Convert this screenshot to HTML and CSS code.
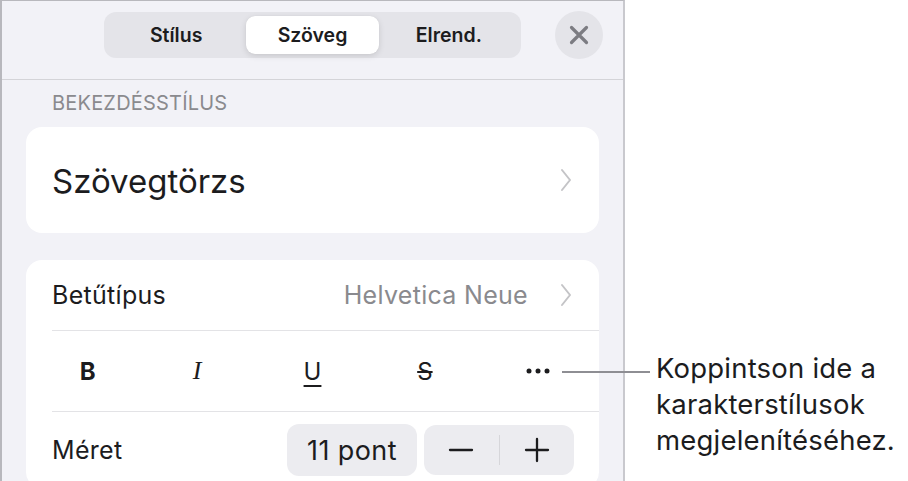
FILE: index.html
```html
<!DOCTYPE html>
<html lang="hu">
<head>
<meta charset="utf-8">
<link rel="stylesheet" href="styles.css">
</head>
<body>
<div class="stage">
  <div class="panel">
    <div class="header">
      <div></div>
      <div class="segmented">
        <div class="seg">Stílus</div>
        <div class="seg active">Szöveg</div>
        <div class="seg">Elrend.</div>
      </div>
      <div class="close">
        <svg width="20" height="20" viewBox="0 0 20 20"><path d="M2.5 2.5 L17.5 17.5 M17.5 2.5 L2.5 17.5" stroke="#7c7c82" stroke-width="3.2" stroke-linecap="round" fill="none"/></svg>
      </div>
    </div>
    <div class="section-title">BEKEZDÉSSTÍLUS</div>
    <div class="card card-style">
      <span class="big">Szövegtörzs</span>
      <svg class="chev" width="12" height="24" viewBox="0 0 12 24"><path d="M2 2 L10 12 L2 22" stroke="#c4c4c7" stroke-width="2" fill="none" stroke-linecap="round" stroke-linejoin="round"/></svg>
    </div>
    <div class="card card-font">
      <div class="row row-font">
        <span class="label">Betűtípus</span>
        <span class="value">Helvetica Neue</span>
        <svg class="chev" width="12" height="24" viewBox="0 0 12 24"><path d="M2 2 L10 12 L2 22" stroke="#c4c4c7" stroke-width="2" fill="none" stroke-linecap="round" stroke-linejoin="round"/></svg>
      </div>
      <div class="row row-styles">
        <span class="fmt b">B</span>
        <span class="fmt i">I</span>
        <span class="fmt u">U</span>
        <span class="fmt s">S</span>
        <span class="fmt dots">
          <svg width="24" height="6" viewBox="0 0 24 6"><circle cx="3" cy="3" r="2.5" fill="#1c1c1e"/><circle cx="12" cy="3" r="2.5" fill="#1c1c1e"/><circle cx="21" cy="3" r="2.5" fill="#1c1c1e"/></svg>
        </span>
      </div>
      <div class="row row-size">
        <span class="label">Méret</span>
        <div class="size-box">11 pont</div>
        <div class="stepper">
          <span class="step">
            <svg width="26" height="26" viewBox="0 0 26 26"><path d="M2 13 H24" stroke="#1c1c1e" stroke-width="2.3" stroke-linecap="round"/></svg>
          </span>
          <span class="step-div"></span>
          <span class="step">
            <svg width="26" height="26" viewBox="0 0 26 26"><path d="M2 13 H24 M13 2 V24" stroke="#1c1c1e" stroke-width="2.3" stroke-linecap="round"/></svg>
          </span>
        </div>
      </div>
    </div>
  </div>
  <div class="callout">
    <span class="callout-line"></span>
    <p class="callout-text">Koppintson ide a<br>karakterstílusok<br>megjelenítéséhez.</p>
  </div>
</div>
</body>
</html>
```

FILE: styles.css
```css
html, body {
  margin: 0;
  padding: 0;
  background: #ffffff;
}
body {
  width: 908px;
  height: 481px;
  overflow: hidden;
  font-family: Inter, "Liberation Sans", sans-serif;
  color: #1c1c1e;
}
.stage {
  position: relative;
  width: 908px;
  height: 481px;
}
.panel {
  width: 621px;
  height: 500px;
  background: #f2f2f7;
  border-left: 2px solid #b8b8bd;
  border-right: 2px solid #c9c9ce;
  border-top: 1px solid #b8b8bd;
}
.header {
  height: 78px;
  border-bottom: 1px solid #d4d4d8;
  display: grid;
  grid-template-columns: 1fr auto 1fr;
  align-items: center;
}
.segmented {
  margin-top: -10px;
  width: 409px;
  height: 38px;
  padding: 4px;
  border-radius: 12px;
  background: #e4e4e9;
  display: grid;
  grid-template-columns: 1fr 1fr 1fr;
}
.seg {
  display: flex;
  align-items: center;
  justify-content: center;
  font-size: 19.5px;
  font-weight: 600;
  border-radius: 9px;
}
.seg.active {
  background: #ffffff;
  margin: 0 2px;
  box-shadow: 0 2px 6px rgba(0,0,0,0.12), 0 0 1px rgba(0,0,0,0.08);
}
.close {
  justify-self: end;
  margin-right: 20px;
  margin-top: -10px;
  width: 48px;
  height: 48px;
  border-radius: 50%;
  background: #e4e4e9;
  display: flex;
  align-items: center;
  justify-content: center;
}
.section-title {
  padding: 11px 0 0 50px;
  box-sizing: border-box;
  height: 47px;
  font-size: 20px;
  color: #8a8a8e;
  letter-spacing: 0.2px;
}
.card {
  margin: 0 24px;
  background: #ffffff;
  border-radius: 16px;
}
.card-style {
  height: 106px;
  display: flex;
  align-items: center;
  justify-content: space-between;
  padding: 0 27px 0 26px;
  box-sizing: border-box;
  margin-bottom: 27px;
}
.big {
  font-size: 33px;
  margin-top: 1px;
}
.chev {
  display: block;
}
.row {
  display: flex;
  align-items: center;
}
.row-font {
  height: 70px;
  padding: 0 27px 0 26px;
  gap: 32px;
}
.row-font .label {
  flex: 1;
}
.label {
  font-size: 25px;
  letter-spacing: 0.3px;
}
.value {
  font-size: 25px;
  color: #8a8a8e;
  letter-spacing: 0.3px;
}
.row-styles {
  height: 80px;
  margin-left: 26px;
  border-top: 1px solid #e3e3e6;
  border-bottom: 1px solid #e3e3e6;
  display: grid;
  grid-template-columns: 1fr 1fr 1fr 1fr 1fr;
}
.fmt {
  display: flex;
  align-items: center;
  justify-content: center;
  font-size: 24px;
  height: 100%;
}
.fmt.b {
  font-weight: 700;
  margin-left: -38px;
}
.fmt.i {
  font-style: italic;
  font-family: "Liberation Serif", serif;
  font-size: 26px;
  margin-left: -38px;
}
.fmt.u {
  text-decoration: underline;
  text-underline-offset: 5px;
  text-decoration-thickness: 1.5px;
  margin-left: -26px;
}
.fmt.s {
  text-decoration: line-through;
  text-decoration-thickness: 1.5px;
  margin-left: -20px;
}
.fmt.dots {
  margin-left: -12px;
}
.row-size {
  height: 76px;
  padding: 0 25px 0 26px;
}
.row-size .label {
  flex: 1;
}
.size-box {
  width: 130px;
  height: 52px;
  border-radius: 12px;
  background: #ececf0;
  display: flex;
  align-items: center;
  justify-content: center;
  font-size: 27px;
  letter-spacing: 0.4px;
  margin-right: 7px;
}
.stepper {
  width: 150px;
  height: 50px;
  border-radius: 12px;
  background: #ececf0;
  display: flex;
  align-items: center;
}
.step {
  flex: 1;
  display: flex;
  align-items: center;
  justify-content: center;
}
.step-div {
  width: 1px;
  height: 30px;
  background: #d6d6da;
}
.callout {
  position: absolute;
  left: 562px;
  top: 350px;
  display: flex;
  align-items: flex-start;
}
.callout-line {
  width: 88px;
  height: 1.5px;
  background: #8e8e93;
  margin-top: 21px;
  margin-right: 6px;
}
.callout-text {
  margin: 0;
  font-size: 27.5px;
  line-height: 36px;
  color: #1c1c1e;
  letter-spacing: 0.2px;
}
```
